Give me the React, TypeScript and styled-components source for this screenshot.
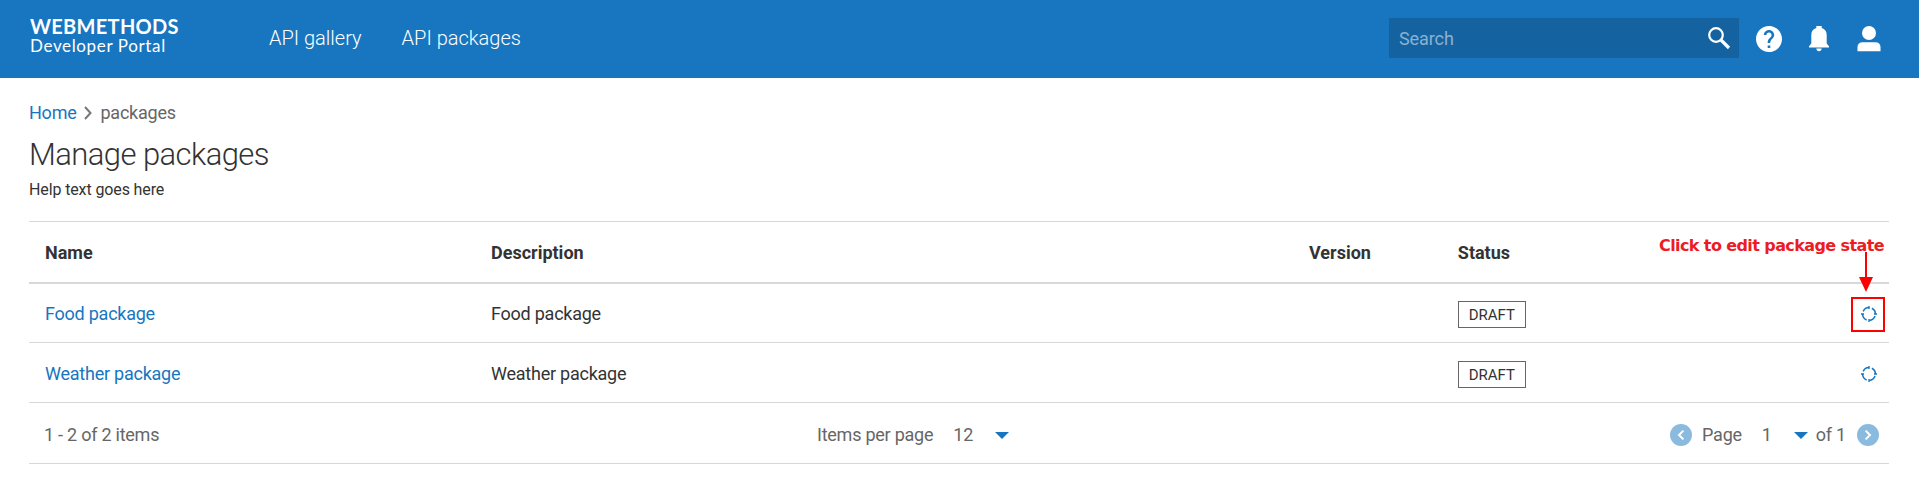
import React from "react";
import styled, { createGlobalStyle, css } from "styled-components";

const Global = createGlobalStyle`
  *, *::before, *::after { box-sizing: border-box; }
  body {
    margin: 0;
    background: #fff;
    color: #333;
    font: 400 18px/24px Roboto, "Liberation Sans", sans-serif;
    letter-spacing: -0.24px;
  }
  svg { display: block; }
`;

const Header = styled.header`
  display: flex;
  align-items: flex-start;
  height: 78px;
  padding: 18px 37px 0 30px;
  background: #1776bf;
  color: #fff;
`;

const Brand = styled.div`
  width: 239px;
  margin-top: -3px;
  font-family: Lato, sans-serif;
  white-space: nowrap;
`;

const BrandName = styled.div`
  font-size: 20px;
  line-height: 22px;
  font-weight: 700;
  letter-spacing: 0.3px;
`;

const BrandProduct = styled.div`
  font-size: 17px;
  line-height: 18px;
  letter-spacing: 0.64px;
`;

const Nav = styled.nav`
  display: flex;
  flex: 1;
  gap: 40px;
  padding-top: 8px;
`;

const NavLink = styled.a`
  font-size: 20px;
  font-weight: 300;
  letter-spacing: 0;
`;

const SearchBox = styled.div`
  display: flex;
  align-items: center;
  justify-content: space-between;
  width: 350px;
  height: 40px;
  padding: 0 8px 0 10px;
  background: #1463a0;
  color: #8ab1d0;
`;

const Placeholder = styled.span`
  padding-top: 1px;
  letter-spacing: -0.1px;
`;

const HeaderIcons = styled.div`
  display: flex;
  gap: 24px;
  margin: 8px 0 0 17px;
`;

const Main = styled.main`
  padding: 0 30px 0 29px;
`;

const Breadcrumb = styled.div`
  display: flex;
  align-items: center;
  gap: 8px;
  padding: 23px 0 0 0;
  color: #666;
`;

const Link = styled.a`
  color: #1776bf;
`;

const Title = styled.h1`
  margin: 10px 0 0;
  font-size: 31px;
  line-height: 40px;
  font-weight: 300;
  letter-spacing: -0.57px;
`;

const Help = styled.p`
  margin: 3px 0 19px;
  font-size: 16px;
  line-height: 24px;
  letter-spacing: -0.12px;
`;

const Table = styled.div`
  border-top: 1px solid #d8d8d8;
`;

const Row = styled.div<{ $head?: boolean }>`
  display: grid;
  grid-template-columns: 446px 818px 8% 8% 1fr;
  align-items: center;
  height: 60px;
  padding-top: 2px;
  border-bottom: 1px solid #d8d8d8;
  ${(p) => p.$head && css`
    height: 62px;
    border-bottom-width: 2px;
    font-weight: 700;
    letter-spacing: 0;
  `}
`;

const FirstRow = styled(Row)`
  height: 59px;
  padding-top: 1px;
`;

const Cell = styled.div<{ $end?: boolean }>`
  display: flex;
  padding: 0 12px 0 16px;
  ${(p) => p.$end && css`justify-content: flex-end;`}
`;

const Badge = styled.span`
  width: 68px;
  height: 27px;
  margin-top: 1px;
  border: 1px solid #666;
  font-size: 15px;
  line-height: 26px;
  letter-spacing: 0;
  text-align: center;
`;

const StateButton = styled.span`
  position: relative;
  width: 16px;
  height: 16px;
`;

const Highlight = styled.span`
  position: absolute;
  top: -9px;
  left: -10px;
  width: 34px;
  height: 35px;
  border: 2px solid #f00;
`;

const Callout = styled.div`
  position: absolute;
  right: -7px;
  top: -72px;
  color: #ed1c24;
  font: 700 16px/24px "DejaVu Sans", sans-serif;
  letter-spacing: -0.6px;
  white-space: nowrap;
`;

const Arrow = styled.svg`
  position: absolute;
  left: -2px;
  top: -54px;
`;

const Footer = styled.div`
  display: grid;
  grid-template-columns: 773px 1fr auto;
  align-items: center;
  height: 61px;
  padding: 4px 10px 0 15px;
  border-bottom: 1px solid #d8d8d8;
  color: #666;
`;

const PageSize = styled.div`
  display: flex;
  align-items: center;
`;

const Pager = styled.div`
  display: flex;
  align-items: center;
`;

const Value = styled.span<{ $width: number; $left: number }>`
  width: ${(p) => p.$width}px;
  margin-left: ${(p) => p.$left}px;
`;

const PageLabel = styled.span`
  margin-left: 10px;
`;

const Total = styled.span`
  margin: 0 11px 0 8px;
`;

const Caret = () => (
  <svg width="14" height="7" viewBox="0 0 14 7"><path d="M0 0h14L7 7z" fill="#1776bf" /></svg>
);

const RoundButton = ({ next = false }: { next?: boolean }) => (
  <svg width="22" height="22" viewBox="0 0 22 22">
    <circle cx="11" cy="11" r="11" fill="#8bbadf" />
    <path d={next ? "M8.6 6.6 13 11l-4.4 4.4" : "M13.4 6.6 9 11l4.4 4.4"} fill="none" stroke="#fff" strokeWidth="2" />
  </svg>
);

const StateIcon = () => (
  <svg width="16" height="16" viewBox="0 0 16 16" fill="none" stroke="#1776bf" strokeWidth="1.5">
    <circle cx="8" cy="8" r="6.4" strokeDasharray="7.4 2.653" strokeDashoffset="-2.2" />
    <path d="M8 0v3M16 8h-3M8 16v-3M0 8h3" strokeWidth="1.3" />
  </svg>
);

const packages = ["Food package", "Weather package"];

export default function App() {
  return (
    <>
      <Global />
      <Header>
        <Brand>
          <BrandName>WEBMETHODS</BrandName>
          <BrandProduct>Developer Portal</BrandProduct>
        </Brand>
        <Nav>
          <NavLink>API gallery</NavLink>
          <NavLink>API packages</NavLink>
        </Nav>
        <SearchBox>
          <Placeholder>Search</Placeholder>
          <svg width="24" height="24" viewBox="0 0 24 24" fill="none" stroke="#fff">
            <circle cx="9" cy="9" r="6.8" strokeWidth="2.2" />
            <path d="m14 14 8 8" strokeWidth="3.2" />
          </svg>
        </SearchBox>
        <HeaderIcons>
          <svg width="26" height="26" viewBox="2 2 20 20" fill="#fff">
            <path d="M12 2C6.48 2 2 6.48 2 12s4.480 10 10 10 10-4.480 10-10S17.520 2 12 2zm1 17h-2v-2h2v2zm2.070-7.750-.9.920C13.450 12.900 13 13.500 13 15h-2v-.5c0-1.100.450-2.100 1.170-2.830l1.240-1.260c.370-.360.590-.860.590-1.410 0-1.100-.9-2-2-2s-2 .9-2 2H8c0-2.210 1.790-4 4-4s4 1.790 4 4c0 .880-.360 1.680-.930 2.250z" />
          </svg>
          <svg width="26" height="26" viewBox="0 0 26 26" fill="#fff">
            <path d="M10.300 0h5.400v2c3.200.8 5 3.500 5 7v8.500l2.300 2.800v1.200H3v-1.200l2.300-2.800V9c0-3.500 1.800-6.200 5-7zM10.300 22.500h5.400c-.2 1.700-1.200 2.700-2.700 2.700s-2.500-1-2.700-2.700z" />
          </svg>
          <svg width="26" height="26" viewBox="0 0 26 26" fill="#fff">
            <circle cx="13" cy="7" r="7" />
            <path d="M1.500 25.300V21c0-3.200 2-4.800 5-4.800h13c3 0 5 1.600 5 4.800v4.300z" />
          </svg>
        </HeaderIcons>
      </Header>
      <Main>
        <Breadcrumb>
          <Link>Home</Link>
          <svg width="8" height="14" viewBox="0 0 8 14" fill="none" stroke="#777" strokeWidth="2"><path d="m1 1 5.500 6L1 13" /></svg>
          <span>packages</span>
        </Breadcrumb>
        <Title>Manage packages</Title>
        <Help>Help text goes here</Help>
        <Table>
          <Row $head>
            <Cell>Name</Cell>
            <Cell>Description</Cell>
            <Cell>Version</Cell>
            <Cell>Status</Cell>
            <Cell />
          </Row>
          {packages.map((name, i) => {
            const Line = i === 0 ? FirstRow : Row;
            return (
              <Line key={name}>
                <Cell><Link>{name}</Link></Cell>
                <Cell>{name}</Cell>
                <Cell />
                <Cell><Badge>DRAFT</Badge></Cell>
                <Cell $end>
                  <StateButton>
                    <StateIcon />
                    {i === 0 && (
                      <>
                        <Highlight />
                        <Callout>Click to edit package state</Callout>
                        <Arrow width="14" height="40" viewBox="0 0 14 40">
                          <path d="M6 0h2v25h6L7 40 0 25h6z" fill="#f00" />
                        </Arrow>
                      </>
                    )}
                  </StateButton>
                </Cell>
              </Line>
            );
          })}
          <Footer>
            <span>1 - 2 of 2 items</span>
            <PageSize>
              <span>Items per page</span>
              <Value $left={20} $width={42}>12</Value>
              <Caret />
            </PageSize>
            <Pager>
              <RoundButton />
              <PageLabel>Page</PageLabel>
              <Value $left={20} $width={32}>1</Value>
              <Caret />
              <Total>of 1</Total>
              <RoundButton next />
            </Pager>
          </Footer>
        </Table>
      </Main>
    </>
  );
}
